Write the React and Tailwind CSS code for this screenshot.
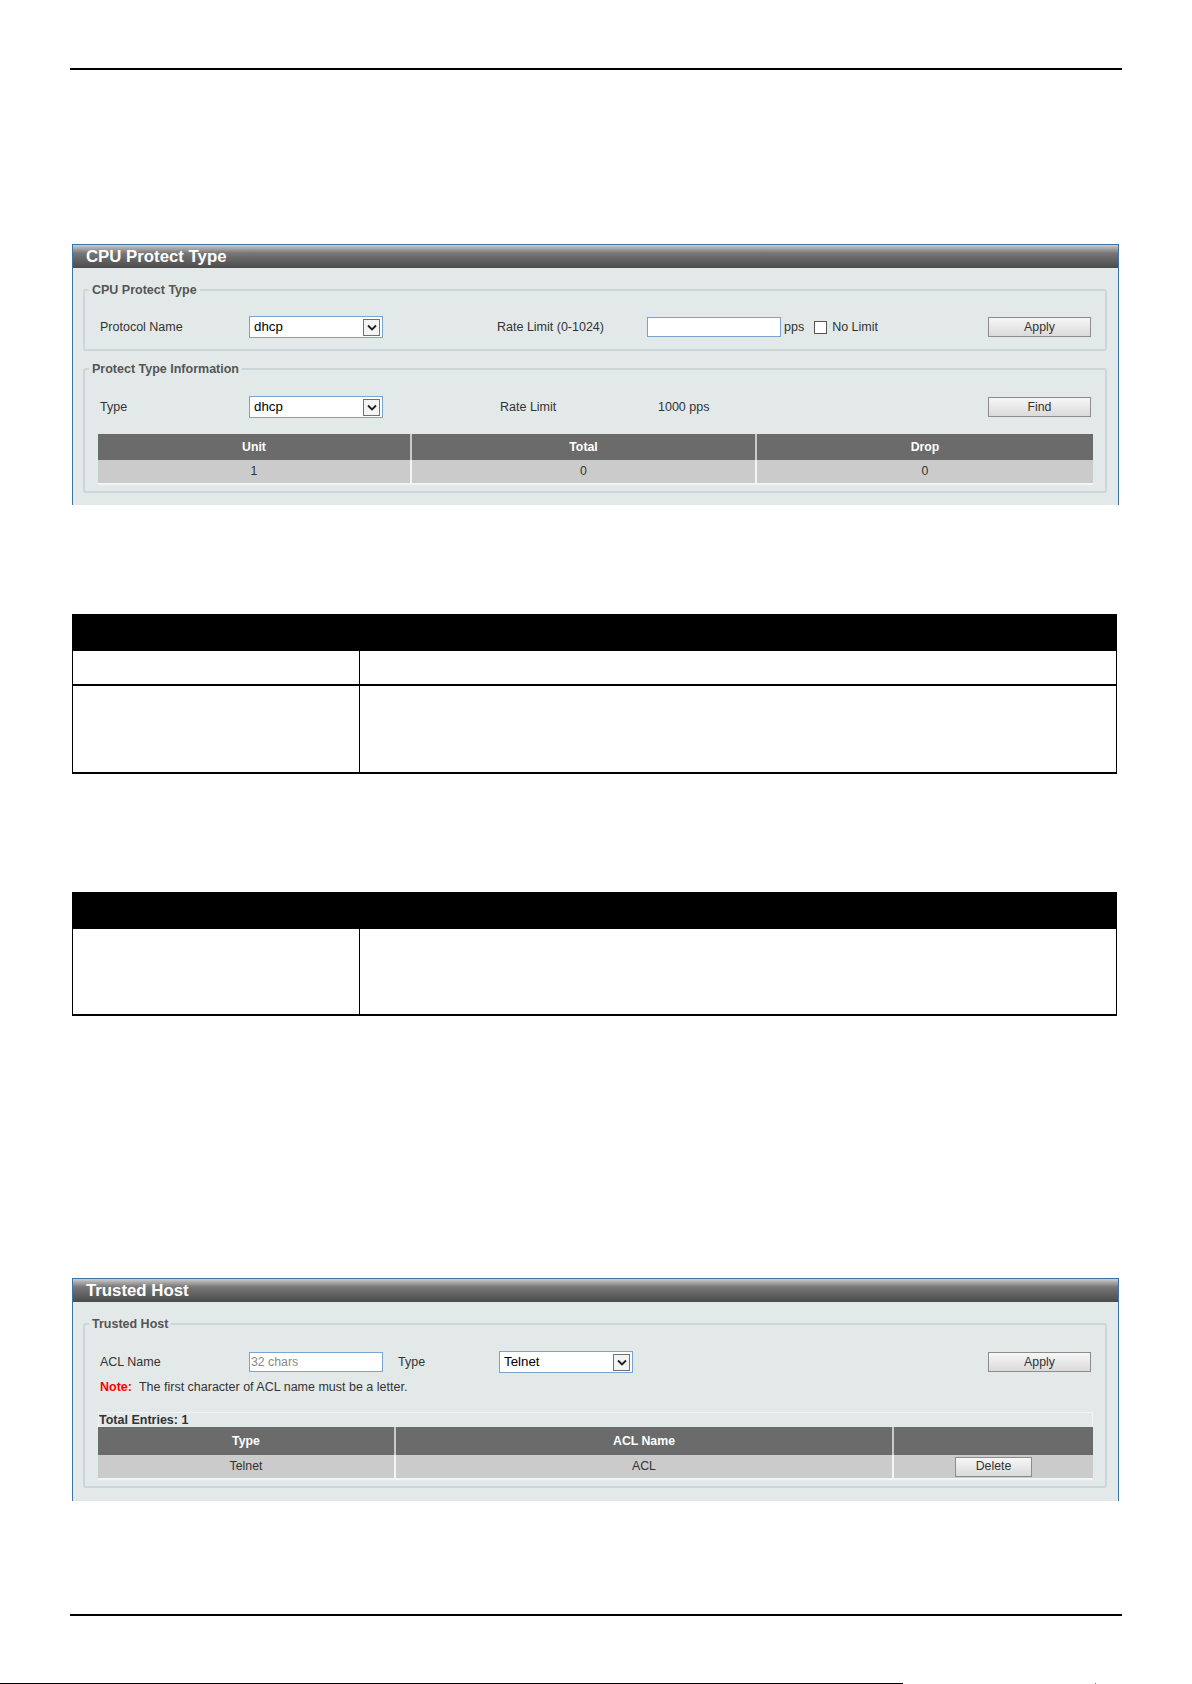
import React from "react";

const font = "font-['Liberation_Sans',Arial,sans-serif]";

function Chevron() {
  return (
    <svg width="10" height="7" viewBox="0 0 10 7">
      <path d="M1 1.5 L5 5.5 L9 1.5" fill="none" stroke="#1f1f1f" strokeWidth="1.8" />
    </svg>
  );
}

function Select({ value, className = "" }) {
  return (
    <div className={`flex h-[22px] w-[134px] items-center border border-[#7aa3cf] bg-white pl-[4px] pr-[2px] ${className}`}>
      <span className="flex-1 text-[13.3px] leading-none text-black">{value}</span>
      <span className="flex h-[17px] w-[17px] items-center justify-center border border-[#707070] bg-[#f4f4f4]">
        <Chevron />
      </span>
    </div>
  );
}

function TextBox({ placeholder, className = "" }) {
  return (
    <div className={`flex h-[20px] w-[134px] items-center border border-[#7aa3cf] bg-white pl-[1px] ${className}`}>
      {placeholder && <span className="text-[12.3px] leading-none text-[#8a8a8a]">{placeholder}</span>}
    </div>
  );
}

function Button({ children, className = "w-[103px]" }) {
  return (
    <button className={`flex h-[20px] items-center justify-center border border-[#8c8c8c] bg-linear-to-b from-[#f7f7f7] to-[#dadada] text-[12.3px] leading-none text-[#333] ${className}`}>
      {children}
    </button>
  );
}

// panel with a dark gradient title bar; the bottom edge is left open
function Panel({ title, children }) {
  return (
    <div className="ml-[72px] w-[1047px] border border-b-0 border-[#3d74a6] bg-[#e3e9e9]">
      <div className="h-[23px] bg-linear-to-b from-[#cdcdcd] via-[#777777] via-35% to-[#4b4b4b] pl-[13px] text-[16.8px] font-bold leading-[23px] text-white">
        {title}
      </div>
      {children}
    </div>
  );
}

function Group({ legend, className = "", children }) {
  return (
    <fieldset className={`ml-[10px] w-[1024px] rounded-[3px] border-2 border-[#cdd6d7] px-[4px] ${className}`}>
      <legend className="px-[3px] text-[12.5px] font-bold leading-[14px] text-[#555]">{legend}</legend>
      {children}
    </fieldset>
  );
}

function GrayTable({ cols, head, row, headH, rowH }) {
  return (
    <div className="ml-[9px] w-[995px] text-[12.3px]">
      <div className="flex bg-[#6b6b6b] font-bold text-white" style={{ height: headH }}>
        {head.map((h, i) => (
          <div
            key={i}
            className={`flex items-center justify-center ${i > 0 ? "border-l-2 border-[#c9c9c9]" : ""}`}
            style={{ width: cols[i] }}
          >
            {h}
          </div>
        ))}
      </div>
      <div className="flex border-b-2 border-[#f4f4f4] bg-[#cbcbcb] text-[#333]" style={{ height: rowH }}>
        {row.map((c, i) => (
          <div
            key={i}
            className={`flex items-center justify-center ${i > 0 ? "border-l-2 border-[#f4f4f4]" : ""}`}
            style={{ width: cols[i] }}
          >
            {c}
          </div>
        ))}
      </div>
    </div>
  );
}

function DocTable({ rows, className = "" }) {
  return (
    <div className={`ml-[72px] w-[1045px] ${className}`}>
      <div className="h-[37px] bg-black" />
      <div className="border-x border-black">
        {rows.map((h, i) => (
          <div key={i} className="grid grid-cols-[287px_1fr] border-b-2 border-black" style={{ height: h }}>
            <div className="border-r border-black" />
            <div />
          </div>
        ))}
      </div>
    </div>
  );
}

function CpuProtectType() {
  return (
    <Panel title="CPU Protect Type">
      <Group legend="CPU Protect Type" className="mt-[15px] pb-[11px]">
        <div className="mt-[19px] flex h-[22px] items-center pl-[11px] pr-[10px] text-[12.5px] text-[#333]">
          <span className="w-[149px]">Protocol Name</span>
          <Select value="dhcp" />
          <span className="ml-[114px] w-[150px]">Rate Limit (0-1024)</span>
          <TextBox />
          <span className="ml-[3px]">pps</span>
          <span className="ml-[10px] h-[13px] w-[13px] border border-[#555] bg-white" />
          <span className="ml-[5px]">No Limit</span>
          <Button className="ml-auto w-[103px]">Apply</Button>
        </div>
      </Group>
      <Group legend="Protect Type Information" className="mt-[11px] pb-[6px]">
        <div className="mt-[20px] flex h-[22px] items-center pl-[11px] pr-[10px] text-[12.5px] text-[#333]">
          <span className="w-[149px]">Type</span>
          <Select value="dhcp" />
          <span className="ml-[117px] w-[158px]">Rate Limit</span>
          <span>1000 pps</span>
          <Button className="ml-auto w-[103px]">Find</Button>
        </div>
        <div className="mt-[16px]">
          <GrayTable
            cols={[312, 345, 338]}
            head={["Unit", "Total", "Drop"]}
            row={["1", "0", "0"]}
            headH={26}
            rowH={25}
          />
        </div>
      </Group>
      <div className="h-[12px]" />
    </Panel>
  );
}

function TrustedHost() {
  return (
    <Panel title="Trusted Host">
      <Group legend="Trusted Host" className="mt-[15px] pb-[6px]">
        <div className="mt-[20px] flex h-[22px] items-center pl-[11px] pr-[10px] text-[12.5px] text-[#333]">
          <span className="w-[149px]">ACL Name</span>
          <TextBox placeholder="32 chars" />
          <span className="ml-[15px] w-[101px]">Type</span>
          <Select value="Telnet" />
          <Button className="ml-auto w-[103px]">Apply</Button>
        </div>
        <div className="mt-[7px] pl-[11px] text-[12.5px] leading-[14px] text-[#333]">
          <span className="mr-[7px] font-bold text-[#ff0000]">Note:</span>
          The first character of ACL name must be a letter.
        </div>
        <div className="mt-[18px] ml-[9px] flex h-[15px] w-[995px] items-center border border-b-0 border-[#f2f4f4] text-[12.5px] font-bold text-[#333]">
          Total Entries: 1
        </div>
        <GrayTable
          cols={[296, 498, 201]}
          head={["Type", "ACL Name", ""]}
          row={["Telnet", "ACL", <Button key="d" className="w-[77px]">Delete</Button>]}
          headH={28}
          rowH={25}
        />
      </Group>
      <div className="h-[13px]" />
    </Panel>
  );
}

export default function App() {
  return (
    <div className={`relative h-[1684px] w-[1192px] overflow-hidden bg-white ${font}`}>
      <div className="pt-[68px]">
        <div className="ml-[70px] h-[2px] w-[1052px] bg-black" />
      </div>

      <div className="mt-[174px]">
        <CpuProtectType />
      </div>

      <DocTable rows={[35, 88]} className="mt-[109px]" />
      <DocTable rows={[87]} className="mt-[118px]" />

      <div className="mt-[262px]">
        <TrustedHost />
      </div>

      <div className="mt-[113px] ml-[70px] h-[2px] w-[1052px] bg-black" />

      <div className="mt-[67px] flex h-[2px] items-end">
        <div className="h-[2px] w-[903px] bg-black" />
        <div className="ml-[192px] h-[2px] w-[1px] bg-[#8a7a2a]" />
      </div>
    </div>
  );
}
